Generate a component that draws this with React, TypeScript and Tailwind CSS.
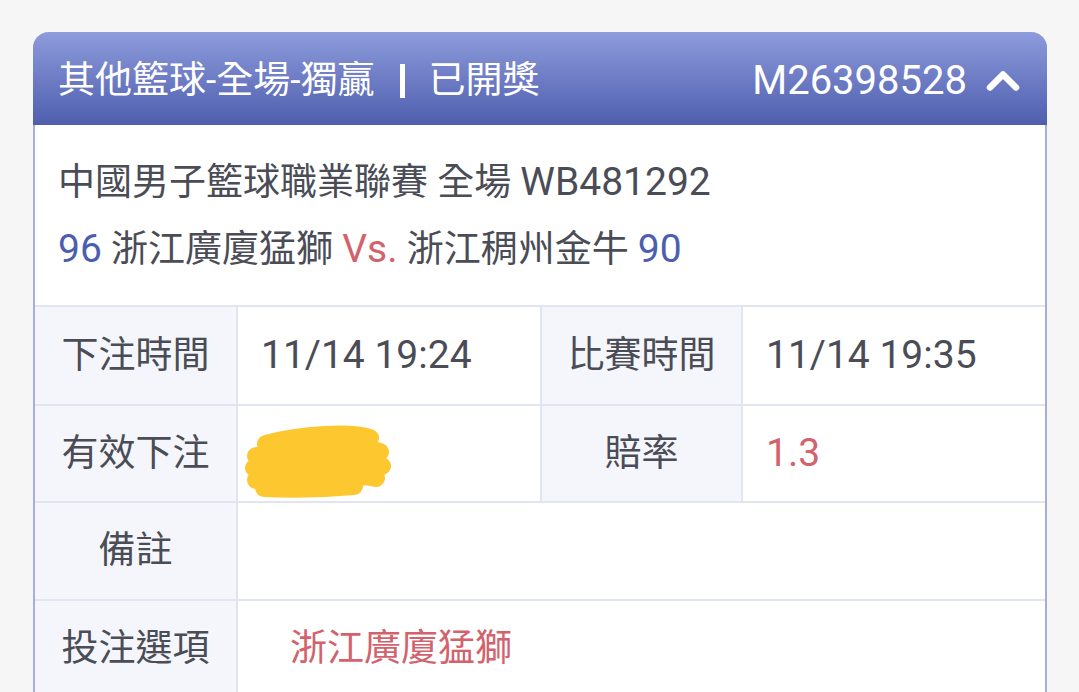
import { ChevronUp } from "lucide-react";

const font = { fontFamily: 'Roboto, "Noto Sans CJK TC", sans-serif' };

function L({ children, className = "" }: { children: React.ReactNode; className?: string }) {
  return <span className={`text-[39px] ${className}`}>{children}</span>;
}

function Scribble() {
  return (
    <svg width="160" height="90" viewBox="0 0 160 90" className="block mt-[22px]">
      <path
        d="M24 24 C60 14 110 12 128 18 M14 36 C60 28 120 26 138 32 M12 48 C60 42 122 40 140 46 M14 60 C60 56 118 54 134 58 M22 68 C60 70 90 68 112 66"
        fill="none"
        stroke="#fdc82f"
        strokeWidth="18"
        strokeLinecap="round"
        strokeLinejoin="round"
      />
    </svg>
  );
}

function Label({ children, wide }: { children: React.ReactNode; wide?: boolean }) {
  return (
    <div
      className={`${wide ? "w-[201px]" : "w-[203px]"} shrink-0 flex items-center justify-center bg-[#f5f6fb] border-r-2 border-[#e1e4f1]`}
    >
      {children}
    </div>
  );
}

export default function App() {
  return (
    <div className="min-h-screen bg-[#f6f6f6] pt-8 pl-[33px] pr-8 overflow-hidden text-[#4a4c56]" style={font}>
      <div className="w-[1014px] rounded-t-[16px] border-x-2 border-[#a8aedb] bg-white">
        <div className="h-[93px] -mx-[2px] rounded-t-[16px] bg-gradient-to-b from-[#8e9bdc] to-[#4f5ead] flex items-center pt-[4px] pl-[25px] pr-[18px] text-white text-[37px]">
          <span>其他籃球-全場-獨贏</span>
          <span className="ml-[26px] mr-[23px] w-[5px] h-[34px] bg-white"></span>
          <span>已開獎</span>
          <span className="ml-auto text-[40px]">M26398528</span>
          <ChevronUp className="ml-[10px] w-[52px] h-[52px]" strokeWidth={3} />
        </div>
        <div className="h-[180px] pl-[23px] pt-[24px] text-[37px] leading-[66px]">
          <div>
            中國男子籃球職業聯賽 全場 <L>WB481292</L>
          </div>
          <div>
            <L className="text-[#4b5eaf]">96</L> 浙江廣廈猛獅 <L className="text-[#d2636d]">Vs.</L> 浙江稠州金牛{" "}
            <L className="text-[#4b5eaf]">90</L>
          </div>
        </div>
        <div className="text-[37px]">
          <div className="flex h-[99px] border-t-2 border-[#e1e4f1]">
            <Label>下注時間</Label>
            <div className="w-[304px] shrink-0 flex items-center pl-[23px] border-r-2 border-[#e1e4f1]">
              <L>11/14 19:24</L>
            </div>
            <Label wide>比賽時間</Label>
            <div className="flex-1 flex items-center pl-[23px]">
              <L>11/14 19:35</L>
            </div>
          </div>
          <div className="flex h-[97px] border-t-2 border-[#e1e4f1]">
            <Label>有效下注</Label>
            <div className="w-[304px] shrink-0 flex items-center pl-[4px] border-r-2 border-[#e1e4f1]">
              <Scribble />
            </div>
            <Label wide>賠率</Label>
            <div className="flex-1 flex items-center pl-[23px] text-[#d2636d]">
              <L>1.3</L>
            </div>
          </div>
          <div className="flex h-[98px] border-t-2 border-[#e1e4f1]">
            <Label>備註</Label>
            <div className="flex-1"></div>
          </div>
          <div className="flex h-[98px] border-t-2 border-[#e1e4f1]">
            <Label>投注選項</Label>
            <div className="flex-1 flex items-center pl-[52px] text-[#d2636d]">浙江廣廈猛獅</div>
          </div>
        </div>
      </div>
    </div>
  );
}
